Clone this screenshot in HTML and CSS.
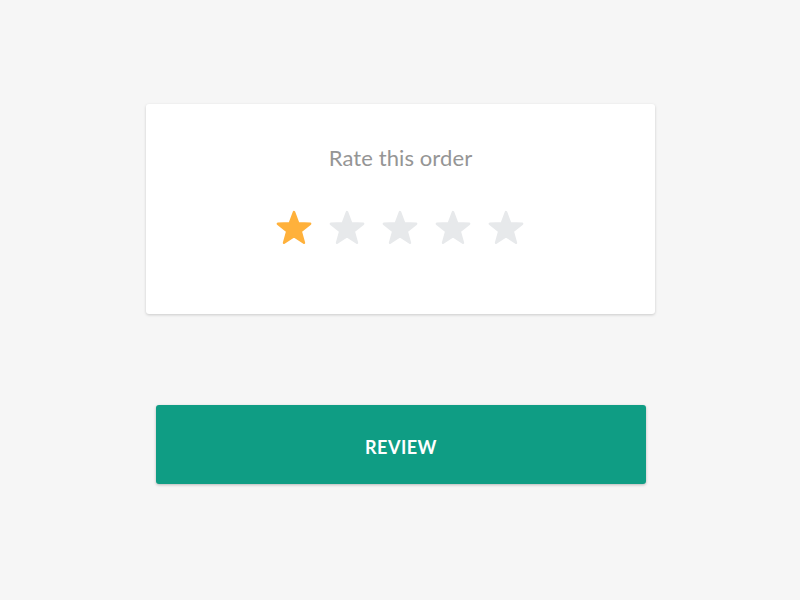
FILE: index.html
```html
<!DOCTYPE html>
<html lang="en">
<head>
    <meta charset="UTF-8">
    <meta name="viewport" content="width=device-width, initial-scale=1.0">
    <title>Rate this order</title>
    <link rel="stylesheet" href="styles.css">
</head>
<body>
    <div class="rating-card">
        <h2 class="rating-title">Rate this order</h2>
        <div class="stars">
            <svg class="star active" viewBox="0 0 36 34"><path d="M18 1L22.2 12.22 34.17 12.75 24.79 20.21 27.99 31.75 18 25.14 8.01 31.75 11.21 20.21 1.83 12.75 13.8 12.22Z"/></svg>
            <svg class="star" viewBox="0 0 36 34"><path d="M18 1L22.2 12.22 34.17 12.75 24.79 20.21 27.99 31.75 18 25.14 8.01 31.75 11.21 20.21 1.83 12.75 13.8 12.22Z"/></svg>
            <svg class="star" viewBox="0 0 36 34"><path d="M18 1L22.2 12.22 34.17 12.75 24.79 20.21 27.99 31.75 18 25.14 8.01 31.75 11.21 20.21 1.83 12.75 13.8 12.22Z"/></svg>
            <svg class="star" viewBox="0 0 36 34"><path d="M18 1L22.2 12.22 34.17 12.75 24.79 20.21 27.99 31.75 18 25.14 8.01 31.75 11.21 20.21 1.83 12.75 13.8 12.22Z"/></svg>
            <svg class="star" viewBox="0 0 36 34"><path d="M18 1L22.2 12.22 34.17 12.75 24.79 20.21 27.99 31.75 18 25.14 8.01 31.75 11.21 20.21 1.83 12.75 13.8 12.22Z"/></svg>
        </div>
    </div>

    <button class="review-btn">REVIEW</button>
</body>
</html>
```

FILE: styles.css
```css
* {
    padding: 0;
    margin: 0;
    box-sizing: border-box;
}
body {
    min-height: 100vh;
    display: flex;
    flex-direction: column;
    align-items: center;
    padding-top: 104px;
    background-color: #f6f6f6;
    font-family: "Lato", "Open Sans", sans-serif;
}
.rating-card {
    width: 509px;
    height: 210px;
    margin-left: 1px;
    background: #fff;
    border-radius: 3px;
    box-shadow: 0 1px 3px rgba(0, 0, 0, 0.18);
    display: flex;
    flex-direction: column;
    align-items: center;
    padding-top: 42px;
}
.rating-title {
    font-size: 22px;
    font-weight: 400;
    color: #959595;
    line-height: 24px;
    letter-spacing: 0.1px;
}
.stars {
    display: flex;
    gap: 17px;
    margin-top: 41px;
    margin-right: 2px;
}
.star {
    width: 36px;
    height: 34px;
    overflow: visible;
    fill: #e7e9eb;
    stroke: #e7e9eb;
    stroke-width: 2.4;
    stroke-linejoin: round;
}
.star.active {
    fill: #ffb13b;
    stroke: #ffb13b;
}
.review-btn {
    margin-top: 91px;
    width: 490px;
    height: 79px;
    margin-left: 2px;
    padding-top: 4px;
    border: none;
    border-radius: 3px;
    background-color: #0f9d84;
    box-shadow: 0 1px 3px rgba(0, 0, 0, 0.25);
    color: #fff;
    font-family: "Lato", "Open Sans", sans-serif;
    font-size: 18px;
    font-weight: 700;
    letter-spacing: 0.5px;
}
```
